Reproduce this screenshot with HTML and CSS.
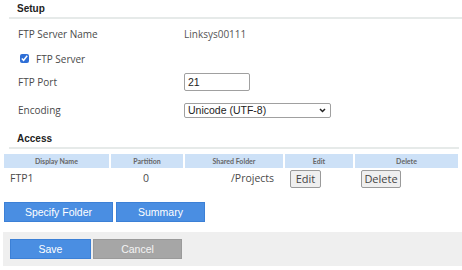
FILE: index.html
```html
<!DOCTYPE html>
<html>
<head>
<meta charset="utf-8">
<link rel="stylesheet" href="styles.css">
</head>
<body>
<div class="section">
  <div class="title">Setup</div>
</div>
<div class="form">
  <div class="row r1"><span class="label">FTP Server Name</span><span class="value">Linksys00111</span></div>
  <div class="row r2"><label class="check"><input type="checkbox" checked><span>FTP Server</span></label></div>
  <div class="row r3"><span class="label">FTP Port</span><input class="port" type="text" value="21"></div>
  <div class="row r4"><span class="label">Encoding</span>
    <div class="select"><span>Unicode (UTF-8)</span>
      <svg width="7" height="5" viewBox="0 0 7 5"><path d="M1 1 L3.5 3.5 L6 1" fill="none" stroke="#222" stroke-width="1.5"/></svg>
    </div>
  </div>
</div>
<div class="section access">
  <div class="title">Access</div>
</div>
<div class="table">
  <div class="th">Display Name</div>
  <div class="th">Partition</div>
  <div class="th">Shared Folder</div>
  <div class="th">Edit</div>
  <div class="th">Delete</div>
  <div class="td name">FTP1</div>
  <div class="td part">0</div>
  <div class="td folder">/Projects</div>
  <div class="td edit"><button class="small b-edit">Edit</button></div>
  <div class="td del"><button class="small b-del">Delete</button></div>
</div>
<div class="actions">
  <button class="blue w1">Specify Folder</button>
  <button class="blue w2">Summary</button>
</div>
<div class="footer">
  <button class="blue save">Save</button>
  <button class="gray cancel">Cancel</button>
</div>
</body>
</html>
```
FILE: styles.css
```css
* { box-sizing: border-box; }
body {
  margin: 0;
  font-family: "Open Sans", "Noto Sans", sans-serif;
  color: #4a4a4a;
  background: #fff;
  width: 462px;
  height: 270px;
  overflow: hidden;
}
.section {
  margin-left: 9px;
  border-bottom: 2px solid #e6eae9;
}
.access { margin-top: 5px; margin-right: 3px; }
.title {
  padding-left: 8px;
  height: 17px;
  line-height: 17px;
  font-family: "Liberation Sans", Arial, sans-serif;
  font-weight: bold;
  font-size: 10px;
  color: #222;
}
.form { padding-left: 18px; }
.row {
  display: flex;
  align-items: center;
  font-size: 10px;
}
.r1 { height: 29px; }
.r2 { height: 21px; }
.r3 { height: 26px; }
.r4 { height: 30px; }
.label { width: 166px; }
.value { color: #555; }
.check {
  display: flex;
  align-items: center;
  margin-left: 2px;
}
.check input {
  width: 9px;
  height: 9px;
  margin: 0 7px 0 0;
  accent-color: #2f6fd6;
}
.port {
  width: 66px;
  height: 18px;
  border: 1px solid #a0a0a0;
  border-radius: 2px;
  padding: 0 3px;
  font-family: "Liberation Sans", Arial, sans-serif;
  font-size: 10.5px;
  color: #222;
}
.select {
  width: 147px;
  height: 15px;
  border: 1px solid #a0a0a0;
  border-radius: 2px;
  display: flex;
  align-items: center;
  justify-content: space-between;
  padding: 0 4px 0 3px;
  font-family: "Liberation Sans", Arial, sans-serif;
  font-size: 10.5px;
  color: #222;
}
.table {
  margin: 5px 0 0 4px;
  display: grid;
  grid-template-columns: 105px 72px 98px 68px 103px;
  column-gap: 2px;
  grid-template-rows: 14px 22px;
}
.th {
  background: #cde1f7;
  font-family: Lato, "Open Sans", sans-serif;
  font-weight: bold;
  font-size: 7px;
  color: #666;
  text-align: center;
  line-height: 14px;
}
.td {
  font-size: 10.5px;
  display: flex;
  align-items: center;
}
.name, .part, .folder { padding-bottom: 2px; }
.name { padding-left: 6px; }
.part { justify-content: center; padding-right: 2px; }
.folder { padding-left: 46px; }
.edit { padding-left: 5px; }
.del { padding-left: 6px; }
button { font-family: inherit; cursor: pointer; }
.small {
  height: 18px;
  padding: 0;
  background: #efefef;
  border: 1px solid #9a9a9a;
  border-radius: 2px;
  color: #444;
  font-family: "Open Sans", sans-serif;
  font-size: 11px;
  line-height: 16px;
}
.b-edit { width: 31px; }
.b-del { width: 40px; }
.actions {
  margin: 12px 0 0 4px;
  display: flex;
  gap: 3px;
}
.blue {
  background: #4a8ee2;
  border: 1px solid #3c80d6;
  color: #fff;
}
.gray {
  background: #a6a6a6;
  border: 1px solid #9a9a9a;
  color: #f4f4f4;
}
.actions button, .footer button {
  height: 20px;
  padding: 0;
  font-family: "Liberation Sans", Arial, sans-serif;
  font-size: 10.5px;
}
.w1 { width: 109px; }
.w2 { width: 89px; }
.footer {
  margin: 10px 0 0 3px;
  height: 34px;
  background: #efefef;
  display: flex;
  gap: 2px;
  padding: 7px 0 0 7px;
}
.save { width: 81px; }
.cancel { width: 89px; }
```
